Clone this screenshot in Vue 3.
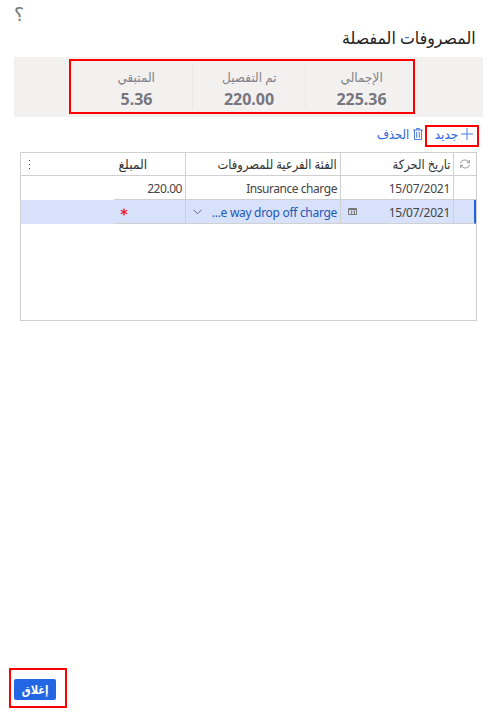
<script setup>
const totals = [
  { label: 'الإجمالي', value: '225.36', key: 'total' },
  { label: 'تم التفصيل', value: '220.00', key: 'itemized' },
  { label: 'المتبقي', value: '5.36', key: 'remaining' },
]
</script>

<template>
  <main class="page" dir="rtl">
    <div class="help"><span>؟</span></div>
    <h1><span>المصروفات المفصلة</span></h1>
    <section class="summary">
      <div class="totals">
        <div v-for="t in totals" :key="t.key" class="total" :class="t.key">
          <span class="label">{{ t.label }}</span>
          <strong>{{ t.value }}</strong>
        </div>
      </div>
    </section>
    <nav class="toolbar">
      <button class="new">
        <svg width="12" height="12" viewBox="0 0 12 12"><path d="M6 0v12M0 6h12" /></svg>
        <span>جديد</span>
      </button>
      <button class="delete">
        <svg width="10" height="13" viewBox="0 0 10 13"><path d="M0 2h10M3.5 2V.5h3V2M1.5 2v9.5h7V2M3.7 3.8v6M6.3 3.8v6" /></svg>
        <span>الحذف</span>
      </button>
    </nav>
    <section class="grid">
      <div class="row head">
        <div class="cell mark">
          <svg width="10" height="10" viewBox="0 0 10 10"><path d="M.6 4.2C.9 2.2 2.6 1 4.7 1c2 0 3.6 1 4.2 2.6M9.3 1v2.7H6.8M9.4 5.8C9.1 7.8 7.4 9 5.3 9c-2 0-3.6-1-4.2-2.6M.7 9V6.3h2.5" /></svg>
        </div>
        <div class="cell date"><span>تاريخ الحركة</span></div>
        <div class="cell category"><span>الفئة الفرعية للمصروفات</span></div>
        <div class="cell amount"><span>المبلغ</span></div>
        <div class="cell more"><i></i><i></i><i></i></div>
      </div>
      <div class="row">
        <div class="cell mark"></div>
        <div class="cell date"><span>15/07/2021</span></div>
        <div class="cell category"><span>Insurance charge</span></div>
        <div class="cell amount"><span>220.00</span></div>
        <div class="cell more"></div>
      </div>
      <div class="row selected">
        <div class="cell mark"></div>
        <div class="cell date">
          <span>15/07/2021</span>
          <svg class="calendar" width="9" height="7" viewBox="0 0 9 7"><path d="M.5 .5h8v6h-8zM.5 1.5h8M2.5 3h1.2v3M5.2 3h1.3v3" /></svg>
        </div>
        <div class="cell category">
          <span dir="ltr">...e way drop off charge</span>
          <svg class="chevron" width="9" height="6" viewBox="0 0 9 6"><path d="M.5.8l4 4 4-4" /></svg>
        </div>
        <div class="cell amount">
          <svg class="required" width="8" height="8" viewBox="0 0 8 8"><path d="M4 .5v7M.8 2.2l6.4 3.6M7.2 2.2L.8 5.8" /></svg>
        </div>
        <div class="cell more"></div>
      </div>
    </section>
    <footer><div class="close-frame"><button class="close"><span>إغلاق</span></button></div></footer>
  </main>
</template>

<style>
body { margin: 0; background: #fff; }
</style>

<style scoped>
* { box-sizing: border-box; }
.page { width: 497px; height: 721px; display: flex; flex-direction: column; overflow: hidden; font-family: "Noto Sans", "DejaVu Sans", sans-serif; color: #444; }
span { display: inline-block; white-space: nowrap; transform-origin: right center; }
svg { fill: none; stroke: currentColor; flex: none; display: block; }
button { font: inherit; border: 0; background: none; padding: 0; }
.help { height: 26px; padding: 3px 0 0 14px; text-align: left; font-size: 19px; line-height: 22px; color: #777; font-weight: 200; }
h1 { margin: 0; height: 31px; padding-right: 21px; font-size: 17px; font-weight: 400; line-height: 24px; color: #222; }
h1 span { transform: scaleX(.93); }
.summary { width: 469px; height: 60px; flex: none; margin-right: 14px; background: #f2f1f0; padding: 2px 68px 0 0; }
.totals { width: 346px; height: 55px; border: 2px solid #f00; display: flex; padding: 3px 0; }
.total { width: 113px; display: flex; flex-direction: column; align-items: center; color: #84828a; border-left: 1px solid #e8e7e6; }
.totals .total:first-child { width: 108px; }
.totals .total:last-child { width: 111px; border-left: 0; }
.label { font-size: 13px; line-height: 26px; margin-bottom: -3px; transform: scaleX(.93); transform-origin: center; }
.total:first-child .label { margin-right: -4px; }
.total strong { font-size: 16px; line-height: 25px; color: #77757e; }
.total:first-child strong { margin-right: -4px; }
.toolbar { height: 35px; padding: 8px 18px 0 0; display: flex; color: #2b66dc; font-size: 13px; }
.toolbar span { transform: scaleX(.93); }
.toolbar svg { opacity: .85; }
.new { width: 54px; height: 22px; border: 2px solid #f00; display: flex; align-items: center; padding: 0 4px 4px 0; gap: 3px; color: inherit; }
.delete { display: flex; align-items: center; height: 18px; gap: 4px; margin-right: 2px; color: inherit; }
.toolbar .delete span { transform: scaleX(.89); }
.grid { width: 457px; height: 169px; flex: none; margin-right: 20px; border: 1px solid #d0d0d0; }
.row { height: 24px; display: flex; font-size: 12px; line-height: 21px; }
.row span { padding-top: 2px; letter-spacing: -.25px; }
.head { height: 23px; }
.head.head span { font-size: 13px; letter-spacing: 0; padding-top: 0; color: #333; transform: translateX(1px) scaleX(.885); }
.head.head .category span { transform: scaleX(.885); }
.cell { border-bottom: 1px solid #d0d0d0; border-left: 1px solid #d0d0d0; display: flex; align-items: center; padding-right: 3px; }
.mark { width: 23px; padding-right: 6px; color: #777; }
.mark svg { stroke-width: .75; }
.date { width: 113px; }
.category { width: 155px; }
.row .category span { letter-spacing: -.45px; }
.selected .category.category span { letter-spacing: -.3px; }
.row.head .category.category span { letter-spacing: 0; }
.amount { width: 71px; border-left: 0; }
.row .amount span { letter-spacing: -.45px; }
.head .amount { padding-right: 38px; }
.head.head .amount.amount span { letter-spacing: 0; transform: scaleX(.95); }
.more { flex: 1; border-left: 0; border-bottom: 0; }
.head .more { border-bottom: 1px solid #d0d0d0; flex-direction: column; align-items: flex-end; justify-content: center; gap: 3px; padding: 0 0 0 8px; }
.more i { width: 1px; height: 1px; background: #444; }
.selected { background: #d7e2fa; }
.selected .mark { border-right: 2px solid #2463df; }
.selected .category { color: #2457b5; }
.calendar { margin-right: auto; margin-left: 7px; color: #777; }
.chevron { margin-right: auto; margin-left: 7px; color: #667; }
.selected .amount { padding-right: 57px; }
.required { stroke: #e81d32; stroke-width: 1.3; }
footer { margin-top: 347px; display: flex; justify-content: flex-end; padding-left: 9px; }
.close-frame { width: 58px; height: 40px; border: 2px solid #f00; padding: 9px 9px 0 0; }
.close { width: 42px; height: 21px; display: flex; align-items: center; justify-content: center; border-radius: 2px; background: #2266e3; color: #fff; font-size: 12px; font-weight: 700; }
.close span { transform: scaleX(.83); transform-origin: center; }
</style>
